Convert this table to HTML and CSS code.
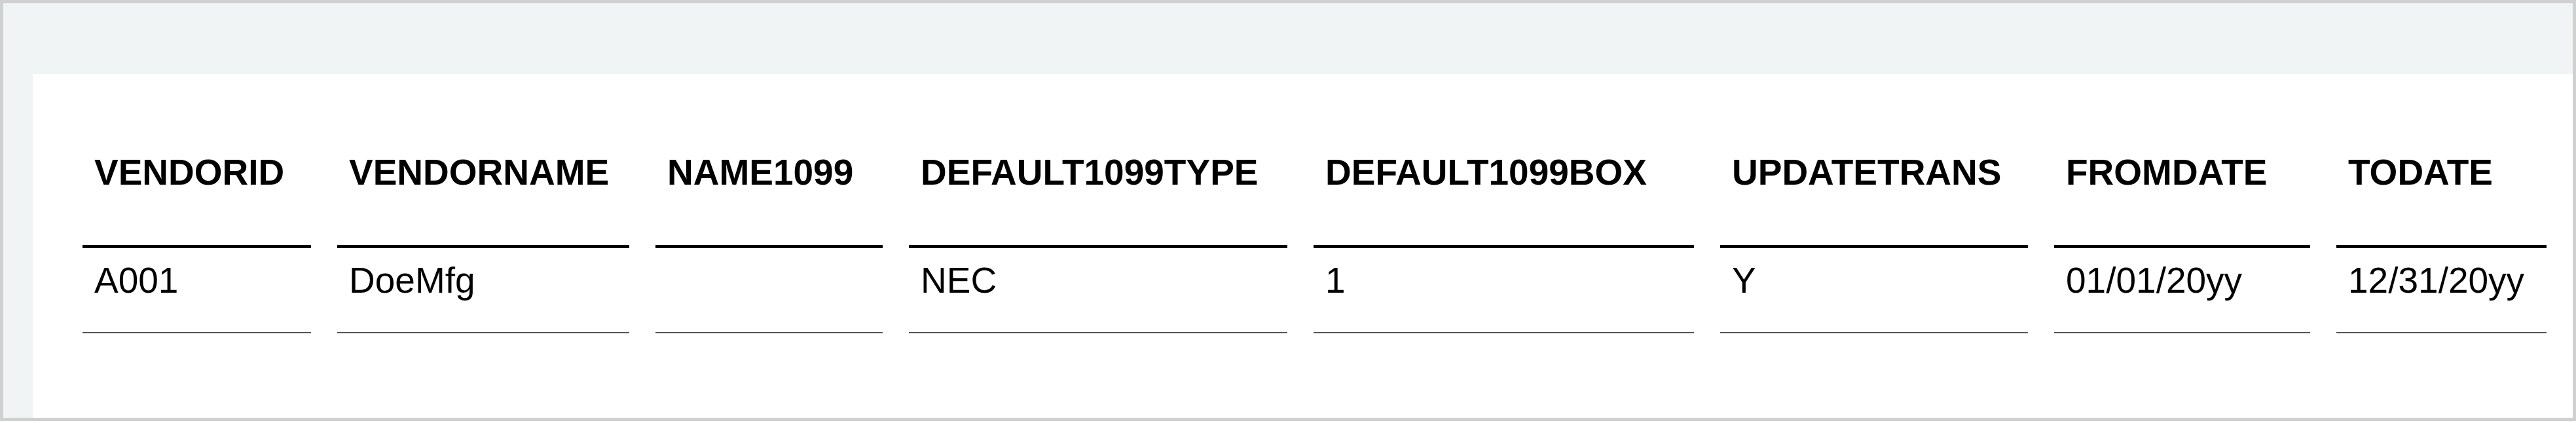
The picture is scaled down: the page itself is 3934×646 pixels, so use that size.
FILE: index.html
```html
<!DOCTYPE html>
<html>
<head>
<meta charset="utf-8">
<link rel="stylesheet" href="styles.css">
</head>
<body>
<div class="frame">
  <div class="panel">
    <div class="table">
      <div class="th">VENDORID</div>
      <div class="th">VENDORNAME</div>
      <div class="th">NAME1099</div>
      <div class="th">DEFAULT1099TYPE</div>
      <div class="th">DEFAULT1099BOX</div>
      <div class="th">UPDATETRANS</div>
      <div class="th">FROMDATE</div>
      <div class="th">TODATE</div>
      <div class="td">A001</div>
      <div class="td">DoeMfg</div>
      <div class="td"></div>
      <div class="td">NEC</div>
      <div class="td">1</div>
      <div class="td">Y</div>
      <div class="td">01/01/20yy</div>
      <div class="td">12/31/20yy</div>
    </div>
  </div>
</div>
</body>
</html>
```

FILE: styles.css
```css
html, body {
  margin: 0;
  padding: 0;
  background: #ffffff;
}
body {
  font-family: "Liberation Sans", Arial, sans-serif;
  color: #000;
}
.frame {
  box-sizing: border-box;
  width: 3934px;
  height: 643px;
  border: 5px solid #d0d0d0;
  border-left-width: 5px;
  background: #f0f4f5;
  padding: 108px 0 0 45px;
  display: flex;
}
.panel {
  flex: 1;
  background: #ffffff;
  padding-left: 76px;
}
.table {
  display: grid;
  grid-template-columns: 349px 446px 347px 578px 581px 470px 391px 321px;
  column-gap: 40px;
}
.th {
  font-weight: bold;
  font-size: 55px;
  line-height: 64px;
  padding: 118px 0 79px 18px;
  border-bottom: 5px solid #000;
  white-space: nowrap;
  background: #fff;
}
.td {
  font-size: 55px;
  line-height: 64px;
  height: 64px;
  padding: 17px 0 47px 18px;
  border-bottom: 2px solid #555;
  white-space: nowrap;
}
```
